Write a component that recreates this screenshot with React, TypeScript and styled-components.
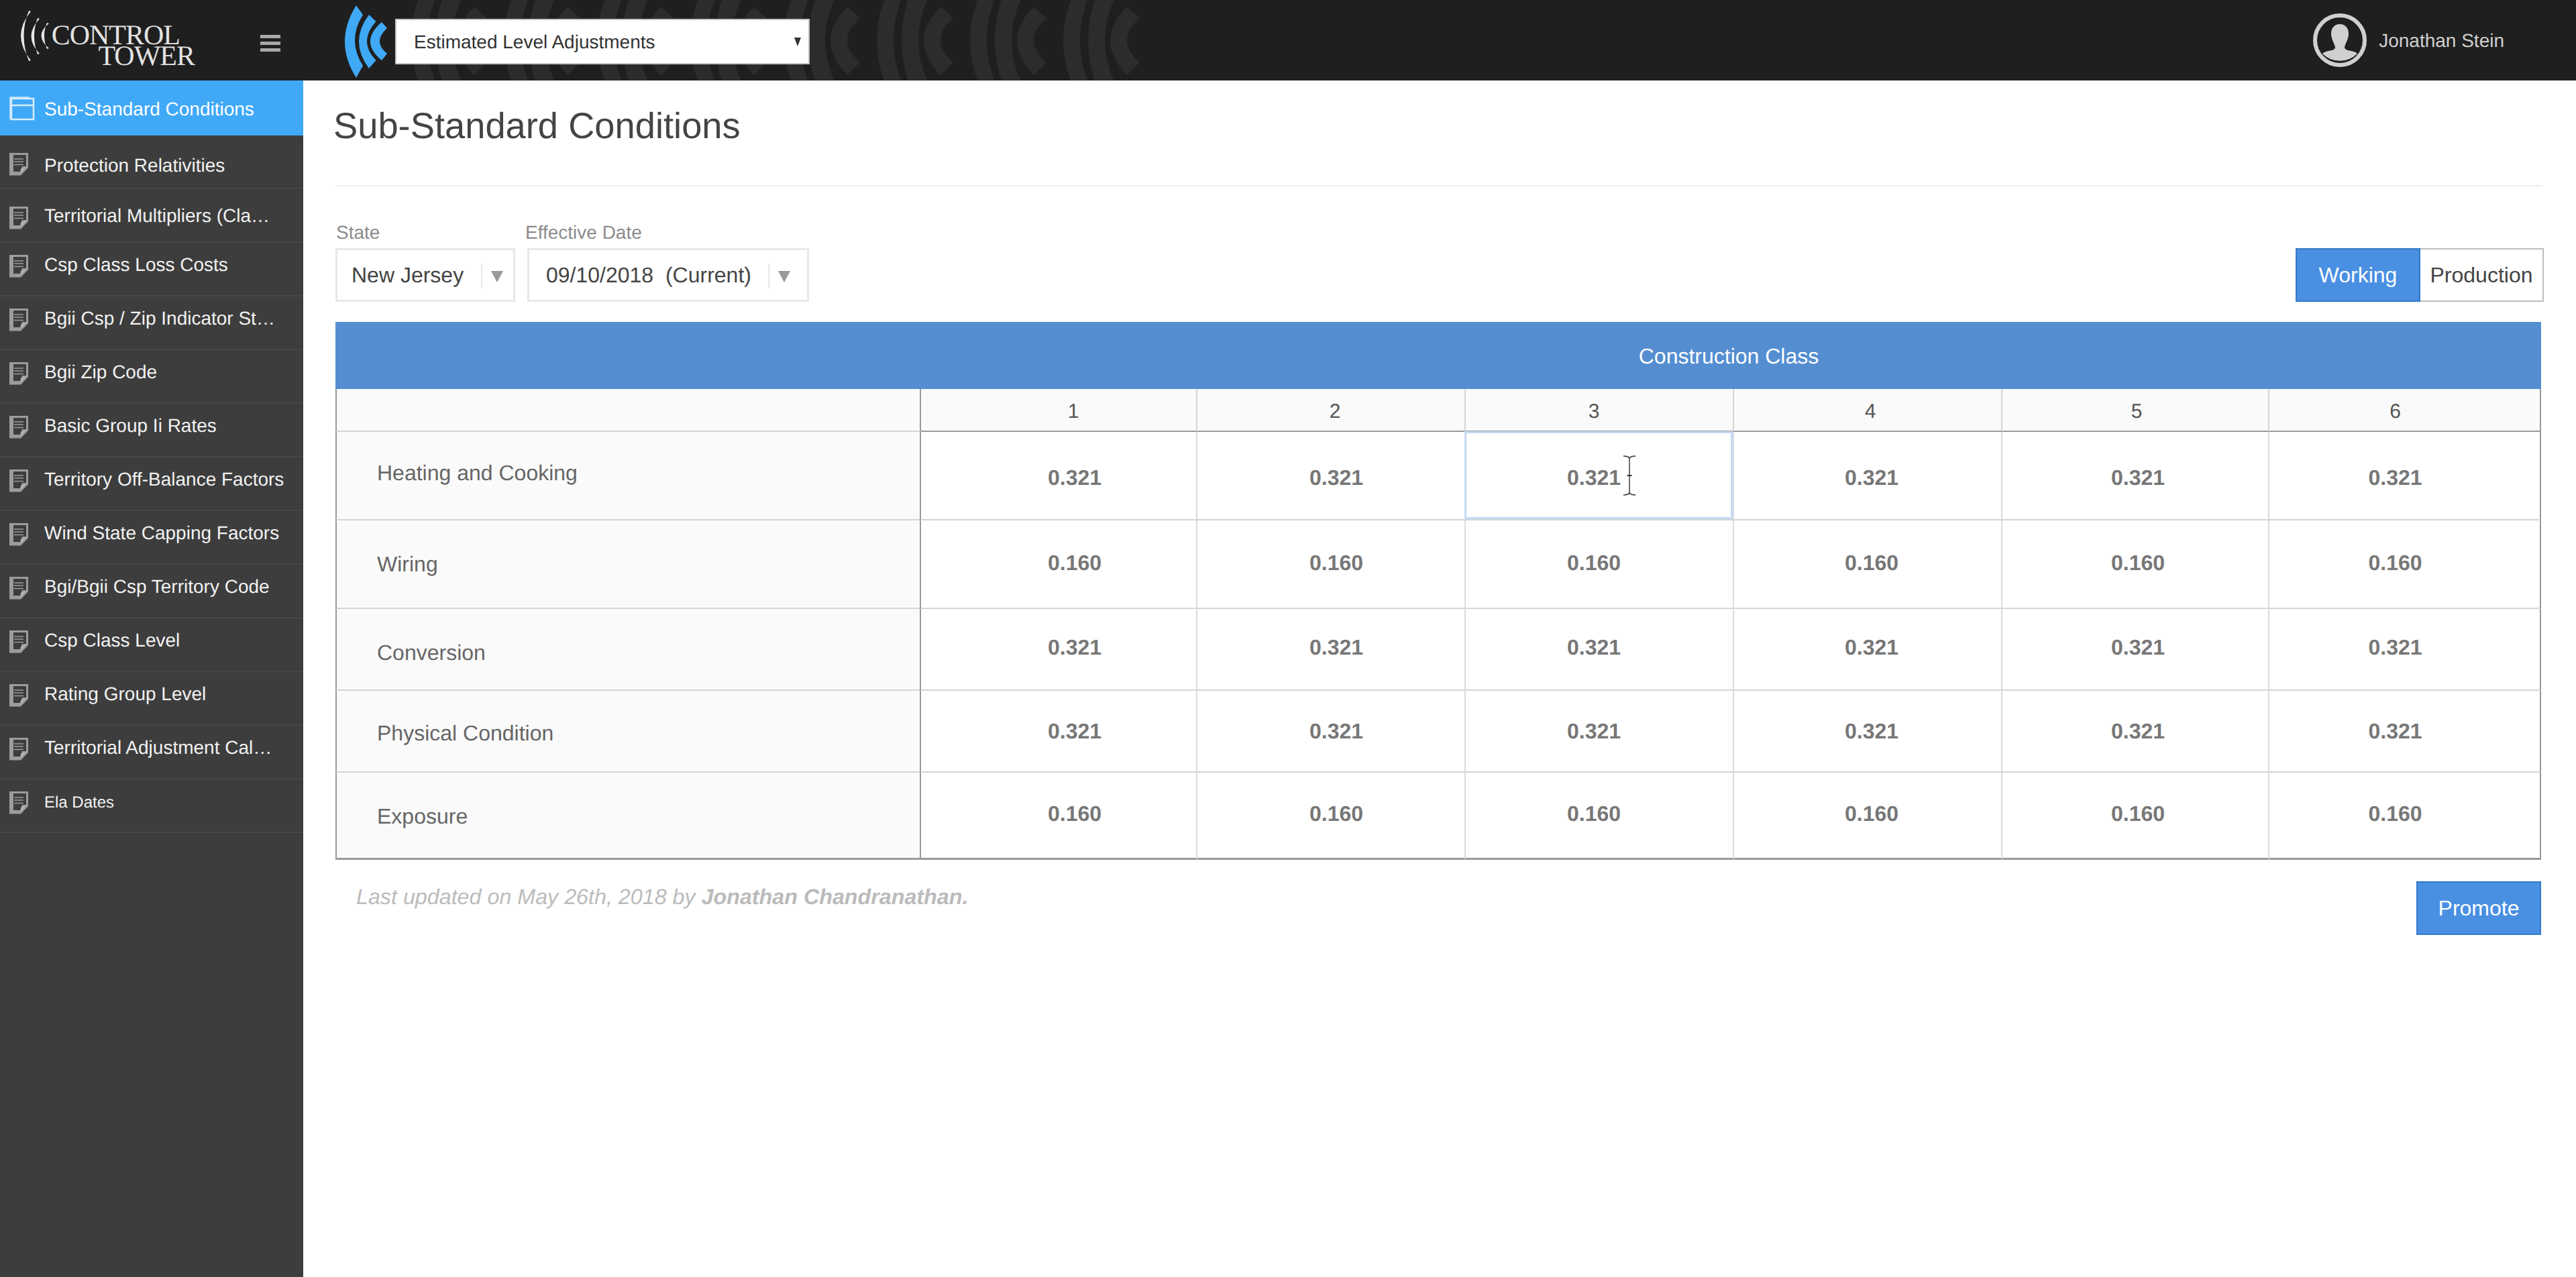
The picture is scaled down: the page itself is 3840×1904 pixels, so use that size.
import styled, { createGlobalStyle } from "styled-components";

const GlobalStyle = createGlobalStyle`
  html, body {
    margin: 0;
    padding: 0;
    background: #fff;
    font-family: "Liberation Sans", Arial, sans-serif;
    text-rendering: geometricPrecision;
  }
  * { box-sizing: border-box; }
`;

const Page = styled.div`
  width: 3840px;
  min-height: 1904px;
  display: flex;
  flex-direction: column;
`;

/* ---------- top bar ---------- */

const TopBar = styled.header`
  position: relative;
  height: 120px;
  background: #1f1f1f;
  display: flex;
  align-items: center;
  overflow: hidden;
  flex: none;
`;

const Watermark = styled.svg`
  position: absolute;
  left: 612px;
  top: 0;
`;

const BrandCell = styled.div`
  position: relative;
  width: 452px;
  height: 120px;
  display: flex;
  flex: none;
`;

const LogoWordmark = styled.div`
  width: 213px;
  padding-top: 38px;
  display: flex;
  flex-direction: column;
  align-items: flex-end;
  font-family: "Liberation Serif", "Times New Roman", serif;
  font-size: 42px;
  line-height: 31px;
  letter-spacing: -1px;
  color: #e2e2e2;
`;

const LogoLine = styled.span<{ $end: number }>`
  display: block;
  height: 31px;
  margin-right: ${(p) => p.$end}px;
`;

const Burger = styled.div`
  margin: 52px 0 0 98px;
  width: 30px;
  display: flex;
  flex-direction: column;
  gap: 5px;
`;

const BurgerBar = styled.span`
  display: block;
  height: 5px;
  background: #a9a9a9;
`;

const TopSelect = styled.div`
  position: relative;
  width: 618px;
  height: 68px;
  margin-left: 9px;
  margin-top: 4px;
  background: #fff;
  border: 2px solid #c4c4c4;
  display: flex;
  align-items: center;
  justify-content: space-between;
  padding: 2px 11px 0 26px;
  font-size: 28px;
  color: #333;
`;

const TinyArrow = styled.span`
  width: 0;
  height: 0;
  border-left: 5px solid transparent;
  border-right: 5px solid transparent;
  border-top: 13px solid #333;
  margin-top: -2px;
`;

const UserBox = styled.div`
  position: relative;
  margin-left: auto;
  margin-right: 107px;
  display: flex;
  align-items: center;
  gap: 18px;
  font-size: 28px;
  color: #d0d0d0;
`;

const UserName = styled.span`
  margin-top: 2px;
`;

/* ---------- body ---------- */

const Body = styled.div`
  display: flex;
  flex: 1;
`;

const Sidebar = styled.nav`
  width: 452px;
  flex: none;
  background: #3d3d3d;
`;

const NavItem = styled.div<{ $active?: boolean }>`
  height: ${(p) => (p.$active ? 82 : 80)}px;
  padding-left: 14px;
  display: flex;
  align-items: flex-start;
  background: ${(p) => (p.$active ? "#40a9f7" : "#3d3d3d")};
  border-bottom: ${(p) => (p.$active ? "none" : "2px solid #474747")};
  color: ${(p) => (p.$active ? "#fff" : "#f2f2f2")};
`;

const NavIconSlot = styled.div<{ $top: number }>`
  width: 52px;
  flex: none;
  margin-top: ${(p) => p.$top}px;
  display: flex;
`;

const NavText = styled.span<{ $top: number; $small?: boolean }>`
  margin-top: ${(p) => p.$top}px;
  font-size: ${(p) => (p.$small ? 24 : 28)}px;
  line-height: 34px;
  white-space: nowrap;
`;

const Main = styled.main`
  flex: 1;
  min-width: 0;
  padding: 0 52px 0 48px;
`;

const Title = styled.h1`
  margin: 36px 0 0 -3px;
  font-size: 54.3px;
  line-height: 64px;
  font-weight: 400;
  color: #444;
`;

const Divider = styled.div`
  margin-top: 56px;
  margin-right: -2px;
  height: 2px;
  background: #eee;
`;

const ControlRow = styled.div`
  margin-top: 53px;
  display: flex;
  align-items: flex-end;
`;

const FilterGroup = styled.div`
  display: flex;
  flex-direction: column;
  margin-right: 18px;
`;

const FilterLabel = styled.label<{ $shift: number }>`
  margin-left: ${(p) => p.$shift}px;
  font-size: 28px;
  line-height: 32px;
  margin-bottom: 7px;
  color: #8c8c8c;
`;

const FilterBox = styled.div<{ $width: number; $pad: number; $end: number }>`
  width: ${(p) => p.$width}px;
  height: 80px;
  padding: 0 ${(p) => p.$end}px 0 ${(p) => p.$pad}px;
  border: 3px solid #e8e8e8;
  display: flex;
  align-items: center;
  font-size: 32px;
  color: #444;
  white-space: pre;
`;

const FilterSep = styled.span`
  width: 2px;
  height: 37px;
  margin-left: auto;
  margin-top: 2px;
  background: #e8e8e8;
`;

const FilterArrow = styled.span`
  margin-left: 13px;
  margin-top: 4px;
  width: 0;
  height: 0;
  border-left: 9px solid transparent;
  border-right: 9px solid transparent;
  border-top: 17px solid #999;
`;

const ModeToggle = styled.div`
  margin-left: auto;
  margin-right: -4px;
  display: flex;
`;

const ModeButton = styled.button<{ $active?: boolean; $width: number }>`
  width: ${(p) => p.$width}px;
  height: 80px;
  padding: 0;
  font-family: inherit;
  font-size: 32px;
  background: ${(p) => (p.$active ? "#4a90e2" : "#fff")};
  color: ${(p) => (p.$active ? "#fff" : "#444")};
  border: 2px solid ${(p) => (p.$active ? "#3478c8" : "#bdbdbd")};
  border-left-width: ${(p) => (p.$active ? 2 : 0)}px;
`;

/* ---------- rate table ---------- */

const RateTable = styled.section`
  margin-top: 30px;
`;

const Banner = styled.div`
  height: 100px;
  padding: 2px 0 0 866px;
  background: #548ed1;
  color: #fff;
  font-size: 32px;
  display: flex;
  align-items: center;
  justify-content: center;
`;

const GridRow = styled.div<{ $height: number }>`
  display: grid;
  grid-template-columns: 873px 412px 400px 400px 400px 398px 405px;
  height: ${(p) => p.$height}px;
`;

const nudge = (dx: number, dy: number) => `
  padding-left: ${Math.max(dx * 2, 0)}px;
  padding-right: ${Math.max(-dx * 2, 0)}px;
  padding-top: ${Math.max(dy * 2, 0)}px;
  padding-bottom: ${Math.max(-dy * 2, 0)}px;
`;

const LabelCell = styled.div<{ $dy: number; $heading?: boolean; $last?: boolean }>`
  background: #fafafa;
  border-left: 2px solid #999;
  border-right: 2px solid #999;
  border-bottom: ${(p) => (p.$last ? "3px solid #999" : "2px solid #d4d4d4")};
  display: flex;
  align-items: center;
  font-size: 32px;
  color: #666;
  ${(p) => nudge(0, p.$dy)}
  padding-left: 60px;
`;

const HeadCell = styled.div<{ $dx: number; $end?: boolean }>`
  background: #fafafa;
  border-right: 2px solid ${(p) => (p.$end ? "#999" : "#d4d4d4")};
  border-bottom: 2px solid #999;
  display: flex;
  align-items: center;
  justify-content: center;
  font-size: 30px;
  color: #555;
  ${(p) => nudge(p.$dx, 3)}
`;

const ValueCell = styled.div<{ $dx: number; $dy: number; $end?: boolean; $last?: boolean }>`
  position: relative;
  background: #fff;
  border-right: 2px solid ${(p) => (p.$end ? "#999" : "#dcdcdc")};
  border-bottom: ${(p) => (p.$last ? "3px solid #999" : "2px solid #d4d4d4")};
  display: flex;
  align-items: center;
  justify-content: center;
  font-size: 32px;
  font-weight: 700;
  color: #777;
  ${(p) => nudge(p.$dx, p.$dy)}
`;

const FocusRing = styled.div`
  position: absolute;
  left: -2px;
  right: 0;
  top: -1px;
  bottom: 0;
  border: 3px solid #c3daf7;
`;

const TextCursor = styled.svg`
  position: absolute;
  left: 234px;
  top: 35px;
`;

const Footer = styled.div`
  margin-top: 32px;
  display: flex;
  justify-content: space-between;
  align-items: flex-start;
`;

const UpdatedNote = styled.p`
  margin: 5px 0 0 31px;
  font-size: 32.25px;
  line-height: 36px;
  font-style: italic;
  color: #bbb;
`;

const PromoteButton = styled.button`
  width: 186px;
  height: 80px;
  padding: 0;
  font-family: inherit;
  font-size: 32px;
  color: #fff;
  background: #4a90e2;
  border: 2px solid #3478c8;
`;

/* ---------- drawings ---------- */

function LogoArcs() {
  return (
    <svg width="77" height="120" viewBox="0 0 77 120" style={{ flex: "none" }}>
      <g fill="#e6e6e6">
        <path d="M46 17 Q16 53 46 90 L43 91 Q28 53 43 16 Z" />
        <path d="M59 28 Q34 54 59 80 L56 81 Q46 54 56 27 Z" />
        <path d="M73 35 Q50 53 73 72 L70 73 Q62 53 70 34 Z" />
      </g>
    </svg>
  );
}

function BlueWaves() {
  return (
    <svg width="70" height="120" viewBox="10 0 70 120" style={{ flex: "none", marginLeft: 58, position: "relative" }}>
      <g fill="#3fa9f5">
        <path d="M31 8 L41 22 Q17 60 41 98 L31 116 Q-3 62 31 8 Z" />
        <path d="M50 22 L60.5 32 Q33.5 62 60.5 90 L50 102 Q20 62 50 22 Z" />
        <path d="M69 33 L77 42 Q55 62 77 80 L69 90 Q35 62 69 33 Z" />
      </g>
    </svg>
  );
}

const watermarkGroups = [0, 1, 2, 3, 4, 5, 6, 7];

function WaveWatermark() {
  return (
    <Watermark width="1120" height="120" viewBox="0 0 1120 120">
      <g fill="#2c2c2c">
        {watermarkGroups.map((i) => (
          <g key={i} transform={`translate(${i * 139} 0)`}>
            <path d="M15 -10 L40 -10 Q10 60 40 130 L15 130 Q-15 60 15 -10 Z" />
            <path d="M50 -10 L80 -10 Q44 60 80 130 L50 130 Q24 60 50 -10 Z" />
            <path d="M95 10 L114 27 Q76 60 114 93 L95 112 Q45 60 95 10 Z" />
          </g>
        ))}
      </g>
    </Watermark>
  );
}

function UserAvatar() {
  return (
    <svg width="80" height="80" viewBox="0 0 80 80">
      <circle cx="40" cy="40" r="37" fill="none" stroke="#d0d0d0" strokeWidth="6" />
      <path
        fill="#d0d0d0"
        d="M40 16 C31 16 27 23 27 30 C27 38 31 43 33 50 C33 53 31 54 28 55 C22 56 17 57 14 60 A 37 37 0 0 0 66 60 C63 57 58 56 52 55 C49 54 47 53 47 50 C49 43 53 38 53 30 C53 23 49 16 40 16 Z"
      />
    </svg>
  );
}

function DocIcon() {
  return (
    <svg width="28" height="34" viewBox="0 0 28 34">
      <path fill="#9c9c9c" d="M0 0 H28 V22 L17 33.5 H0 Z" />
      <path fill="#3d3d3d" d="M6 3 H25 V20 H19 L16 28 H6 Z" />
      <path fill="#b5b5b5" d="M25 21 L17 30 V24 Z" />
      <path stroke="#9c9c9c" strokeWidth="1.5" d="M7 9 H21 M7 13 H21 M7 17.5 H21" />
    </svg>
  );
}

function WindowIcon() {
  return (
    <svg width="38" height="36" viewBox="0 0 38 36" fill="none" stroke="#d9eefd">
      <rect x="3" y="3" width="33" height="31" strokeWidth="2.5" />
      <path strokeWidth="2.5" d="M3 13 H36" />
      <path strokeWidth="1.5" d="M1 34 V1 H30" />
    </svg>
  );
}

function IBeam() {
  return (
    <TextCursor width="20" height="60" viewBox="0 0 20 60" fill="none" stroke="#333" strokeWidth="1.4">
      <path d="M1 1 Q8 1 10 4 Q12 1 19 1" />
      <path d="M10 4 V56" />
      <path d="M1 59 Q8 59 10 56 Q12 59 19 59" />
      <path d="M6.5 30 H13.5" strokeWidth="2" />
    </TextCursor>
  );
}

/* ---------- data ---------- */

const navItems = [
  { label: "Protection Relativities", iconTop: 26, textTop: 28 },
  { label: "Territorial Multipliers (Cla…", iconTop: 26, textTop: 23 },
  { label: "Csp Class Loss Costs" },
  { label: "Bgii Csp / Zip Indicator St…" },
  { label: "Bgii Zip Code" },
  { label: "Basic Group Ii Rates" },
  { label: "Territory Off-Balance Factors" },
  { label: "Wind State Capping Factors" },
  { label: "Bgi/Bgii Csp Territory Code" },
  { label: "Csp Class Level" },
  { label: "Rating Group Level" },
  { label: "Territorial Adjustment Cal…" },
  { label: "Ela Dates", small: true, textTop: 18 },
];

const headShift = [22, 6, -8, 4, 2, -14];
const valueShift = [24, 8, -8, 6, 4, -14];

const rows = [
  { label: "Heating and Cooking", value: "0.321", height: 132, labelDy: -4, valueDy: 3 },
  { label: "Wiring", value: "0.160", height: 132, labelDy: 0, valueDy: -2 },
  { label: "Conversion", value: "0.321", height: 122, labelDy: 5, valueDy: -3 },
  { label: "Physical Condition", value: "0.321", height: 122, labelDy: 3, valueDy: 0 },
  { label: "Exposure", value: "0.160", height: 130, labelDy: 2, valueDy: -2 },
];

function App() {
  return (
    <Page>
      <GlobalStyle />
      <TopBar>
        <WaveWatermark />
        <BrandCell>
          <LogoArcs />
          <LogoWordmark>
            <LogoLine $end={22}>CONTROL</LogoLine>
            <LogoLine $end={0}>TOWER</LogoLine>
          </LogoWordmark>
          <Burger>
            <BurgerBar />
            <BurgerBar />
            <BurgerBar />
          </Burger>
        </BrandCell>
        <BlueWaves />
        <TopSelect>
          Estimated Level Adjustments
          <TinyArrow />
        </TopSelect>
        <UserBox>
          <UserAvatar />
          <UserName>Jonathan Stein</UserName>
        </UserBox>
      </TopBar>

      <Body>
        <Sidebar>
          <NavItem $active>
            <NavIconSlot $top={24}>
              <WindowIcon />
            </NavIconSlot>
            <NavText $top={26}>Sub-Standard Conditions</NavText>
          </NavItem>
          {navItems.map((item) => (
            <NavItem key={item.label}>
              <NavIconSlot $top={item.iconTop ?? 18}>
                <DocIcon />
              </NavIconSlot>
              <NavText $top={item.textTop ?? 16} $small={item.small}>
                {item.label}
              </NavText>
            </NavItem>
          ))}
        </Sidebar>

        <Main>
          <Title>Sub-Standard Conditions</Title>
          <Divider />

          <ControlRow>
            <FilterGroup>
              <FilterLabel $shift={1}>State</FilterLabel>
              <FilterBox $width={268} $pad={21} $end={15}>
                New Jersey
                <FilterSep />
                <FilterArrow />
              </FilterBox>
            </FilterGroup>
            <FilterGroup>
              <FilterLabel $shift={-3}>Effective Date</FilterLabel>
              <FilterBox $width={420} $pad={25} $end={25}>
                {"09/10/2018  (Current)"}
                <FilterSep />
                <FilterArrow />
              </FilterBox>
            </FilterGroup>
            <ModeToggle>
              <ModeButton $active $width={186}>Working</ModeButton>
              <ModeButton $width={184}>Production</ModeButton>
            </ModeToggle>
          </ControlRow>

          <RateTable>
            <Banner>Construction Class</Banner>
            <GridRow $height={64}>
              <LabelCell $dy={0} />
              {headShift.map((dx, i) => (
                <HeadCell key={i} $dx={dx} $end={i === 5}>
                  {i + 1}
                </HeadCell>
              ))}
            </GridRow>
            {rows.map((row, r) => (
              <GridRow key={row.label} $height={row.height}>
                <LabelCell $dy={row.labelDy} $last={r === rows.length - 1}>
                  {row.label}
                </LabelCell>
                {valueShift.map((dx, c) => (
                  <ValueCell
                    key={c}
                    $dx={dx}
                    $dy={row.valueDy}
                    $end={c === 5}
                    $last={r === rows.length - 1}
                  >
                    {row.value}
                    {r === 0 && c === 2 && (
                      <>
                        <FocusRing />
                        <IBeam />
                      </>
                    )}
                  </ValueCell>
                ))}
              </GridRow>
            ))}
          </RateTable>

          <Footer>
            <UpdatedNote>
              Last updated on May 26th, 2018 by <strong>Jonathan Chandranathan.</strong>
            </UpdatedNote>
            <PromoteButton>Promote</PromoteButton>
          </Footer>
        </Main>
      </Body>
    </Page>
  );
}

export default App;
